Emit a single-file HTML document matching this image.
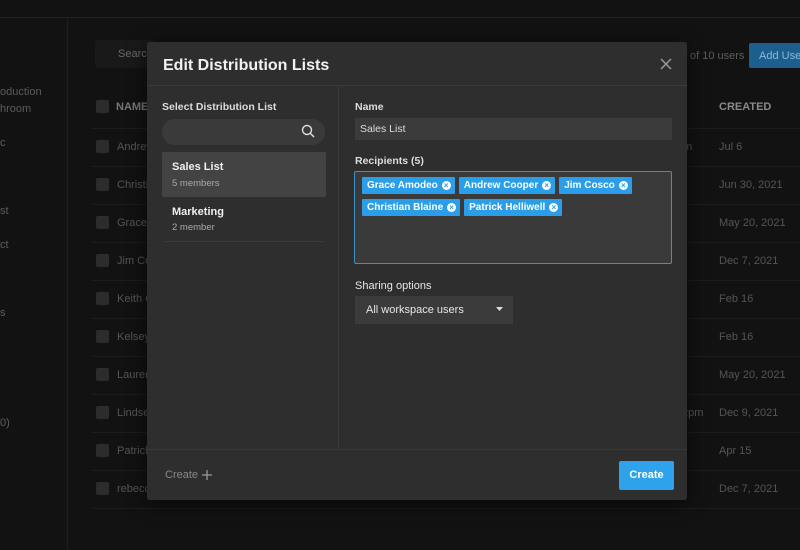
<!DOCTYPE html>
<html><head><style>
*{margin:0;padding:0;box-sizing:border-box}
body{width:800px;height:550px;background:#121212;font-family:"Liberation Sans",sans-serif;position:relative;overflow:hidden;color:#ddd}
.abs{position:absolute}
.bgt{color:#5c5c5c;font-size:11px;white-space:nowrap}
.row{position:absolute;left:92px;width:708px;height:38px;border-top:1px solid #1c1c1c}
.cb{position:absolute;left:4px;top:11px;width:13px;height:13px;background:#2c2c2c;border-radius:2px}
.row .n{position:absolute;left:25px;top:12px;font-size:11px;color:#555}
.row .d{position:absolute;left:627px;top:12px;font-size:11px;color:#555}
.modal{position:absolute;left:147px;top:42px;width:540px;height:458px;background:#2e2e2e;border-radius:3px;box-shadow:0 4px 20px rgba(0,0,0,.6)}
.lbl{font-size:10.5px;font-weight:bold;color:#ddd;position:absolute}
.chips{position:absolute;left:215px;top:135px;width:305px;display:flex;flex-wrap:wrap;gap:5px 4px}
.chip{position:relative;height:17px;background:#2a9ee8;color:#fff;font-size:10px;font-weight:bold;padding:3px 17px 0 5px;border-radius:1px;white-space:nowrap}
.chip i{position:absolute;right:4px;top:4px;width:9px;height:9px;border-radius:50%;background:#fff;color:#2a9ee8;font-size:8px;line-height:9px;text-align:center;font-style:normal}
</style></head><body>
<div class="abs" style="left:0;top:17px;width:800px;height:1px;background:#222"></div>
<div class="abs" style="left:67px;top:18px;width:1px;height:532px;background:#1e1e1e"></div>
<div class="abs bgt" style="left:0;top:84px;line-height:17px">oduction<br>hroom<br><br>c<br><br><br><br>st<br><br>ct<br><br><br><br>s</div>
<div class="abs bgt" style="left:0;top:417px">0)</div>
<div class="abs" style="left:95px;top:40px;width:60px;height:28px;background:#191919;border-radius:4px"></div>
<div class="abs bgt" style="left:118px;top:48px;color:#6a6a6a">Search</div>
<div class="abs bgt" style="left:690px;top:50px">of 10 users</div>
<div class="abs" style="left:749px;top:43px;width:60px;height:25px;background:#1d5f8c;border-radius:2px;color:#8cb8d8;font-size:11px;padding:7px 10px;white-space:nowrap">Add User</div>
<div class="abs" style="left:96px;top:100px;width:13px;height:13px;background:#2c2c2c;border-radius:2px"></div>
<div class="abs bgt" style="left:116px;top:101px;font-weight:bold;color:#777">NAME</div>
<div class="abs bgt" style="left:719px;top:101px;font-weight:bold;color:#8a8a8a">CREATED</div>
<div class="row" style="top:128px"><div class="cb"></div><div class="n">Andrew</div><div class="d">Jul 6</div><div class="n" style="left:585px">am</div></div>
<div class="row" style="top:166px"><div class="cb"></div><div class="n">Christian</div><div class="d">Jun 30, 2021</div></div>
<div class="row" style="top:204px"><div class="cb"></div><div class="n">Grace</div><div class="d">May 20, 2021</div></div>
<div class="row" style="top:242px"><div class="cb"></div><div class="n">Jim Co</div><div class="d">Dec 7, 2021</div></div>
<div class="row" style="top:280px"><div class="cb"></div><div class="n">Keith C</div><div class="d">Feb 16</div></div>
<div class="row" style="top:318px"><div class="cb"></div><div class="n">Kelsey</div><div class="d">Feb 16</div></div>
<div class="row" style="top:356px"><div class="cb"></div><div class="n">Lauren</div><div class="d">May 20, 2021</div></div>
<div class="row" style="top:394px"><div class="cb"></div><div class="n">Lindsey</div><div class="d">Dec 9, 2021</div><div class="n" style="left:590px">2pm</div></div>
<div class="row" style="top:432px"><div class="cb"></div><div class="n">Patrick</div><div class="d">Apr 15</div></div>
<div class="row" style="top:470px"><div class="cb"></div><div class="n">rebecca</div><div class="d">Dec 7, 2021</div></div>
<div class="row" style="top:508px"></div>

<div class="modal">
 <div class="abs" style="left:16px;top:15px;font-size:16px;font-weight:bold;color:#f2f2f2">Edit Distribution Lists</div>
 <svg class="abs" style="left:513px;top:16px" width="12" height="12"><path d="M1 1L11 11M11 1L1 11" stroke="#999" stroke-width="1.5"/></svg>
 <div class="abs" style="left:0;top:43px;width:540px;height:1px;background:#3a3a3a"></div>
 <div class="abs" style="left:191px;top:44px;width:1px;height:363px;background:#3a3a3a"></div>
 <div class="lbl" style="left:15px;top:59px">Select Distribution List</div>
 <div class="abs" style="left:15px;top:77px;width:163px;height:26px;background:#3a3a3a;border-radius:13px"></div>
 <svg class="abs" style="left:154px;top:82px" width="14" height="14"><circle cx="6" cy="6" r="4.5" stroke="#ddd" stroke-width="1.4" fill="none"/><path d="M9.5 9.5L13 13" stroke="#ddd" stroke-width="1.5"/></svg>
 <div class="abs" style="left:15px;top:110px;width:164px;height:45px;background:#434343;border-radius:2px"></div>
 <div class="abs" style="left:25px;top:119px;font-size:11px;font-weight:bold;color:#f0f0f0">Sales List</div>
 <div class="abs" style="left:25px;top:136px;font-size:9.5px;color:#aaa">5 members</div>
 <div class="abs" style="left:25px;top:164px;font-size:11px;font-weight:bold;color:#f0f0f0">Marketing</div>
 <div class="abs" style="left:25px;top:180px;font-size:9.5px;color:#aaa">2 member</div>
 <div class="abs" style="left:17px;top:199px;width:160px;height:1px;background:#3c3c3c"></div>
 <div class="lbl" style="left:208px;top:59px">Name</div>
 <div class="abs" style="left:208px;top:76px;width:317px;height:22px;background:#3b3b3b;font-size:10.5px;color:#ddd;padding:5px 5px">Sales List</div>
 <div class="lbl" style="left:208px;top:113px">Recipients (5)</div>
 <div class="abs" style="left:207px;top:129px;width:318px;height:93px;background:#3a3a3a;border:1px solid #3f90c8;border-radius:2px"></div>
 <div class="chips">
  <div class="chip">Grace Amodeo<i>×</i></div>
  <div class="chip">Andrew Cooper<i>×</i></div>
  <div class="chip">Jim Cosco<i>×</i></div>
  <div class="chip">Christian Blaine<i>×</i></div>
  <div class="chip">Patrick Helliwell<i>×</i></div>
 </div>
 <div class="lbl" style="left:208px;top:238px;font-weight:normal;color:#e6e6e6;font-size:11px">Sharing options</div>
 <div class="abs" style="left:208px;top:254px;width:158px;height:28px;background:#3b3b3b;font-size:11px;color:#e6e6e6;padding:8px 11px">All workspace users</div>
 <svg class="abs" style="left:349px;top:265px" width="7" height="5"><path d="M0 0H7L3.5 4Z" fill="#ddd"/></svg>
 <div class="abs" style="left:0;top:407px;width:540px;height:1px;background:#383838"></div>
 <div class="abs" style="left:18px;top:427px;font-size:11px;color:#888">Create</div>
 <svg class="abs" style="left:55px;top:428px" width="10" height="10"><path d="M5 0V10M0 5H10" stroke="#999" stroke-width="1.3"/></svg>
 <div class="abs" style="left:472px;top:419px;width:55px;height:29px;background:#2ea3ec;border-radius:2px;color:#fff;font-size:11px;font-weight:bold;text-align:center;line-height:29px">Create</div>
</div>
</body></html>
